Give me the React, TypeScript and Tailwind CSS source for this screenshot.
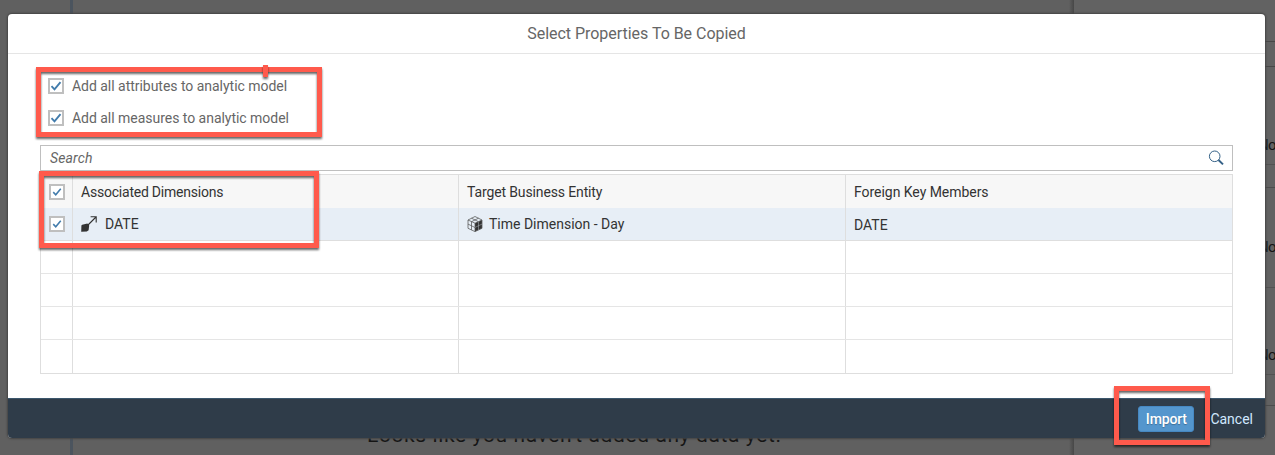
import React from "react";

function Check({ small = false }: { small?: boolean }) {
  return (
    <span className="flex h-4 w-4 shrink-0 items-center justify-center border-2 border-[#bfbfbf] bg-white">
      <svg viewBox="0 0 12 12" className={small ? "h-[10px] w-[10px]" : "h-3 w-3"} fill="none" stroke="#427cac" strokeWidth="1.9">
        <path d="M1.5 6.2 4.5 9.3 10.5 2.2" />
      </svg>
    </span>
  );
}

function Option({ label }: { label: string }) {
  return (
    <div className="flex h-8 items-center gap-2 text-[#666]">
      <Check />
      <span className="tracking-[-0.03px]">{label}</span>
    </div>
  );
}

function LinkIcon() {
  return (
    <svg viewBox="0 0 16 16" className="h-4 w-4 shrink-0" fill="none" stroke="#333" strokeWidth="1.1">
      <path d="M6 10 15 1M9.6.8h5.6v5.6" />
      <path d="M1.2 8.7 6.4 7.6 8.2 9.4 7.6 14.2 5.8 15.4.2 15.8.4 9.6Z" fill="#333" stroke="none" />
    </svg>
  );
}

function CubeIcon() {
  return (
    <svg viewBox="0 0 16 16" className="h-4 w-4 shrink-0" fill="none" stroke="#555" strokeWidth=".75">
      <path d="M8 7.2 15 4v8.3L8 15.6Z" fill="#333" stroke="none" />
      <path d="M8 .5 15 4v8.3L8 15.6 1 12.3V4ZM1 4l7 3.2L15 4M8 7.2v8.4M1 8.1l7 3.4M4.5 5.6v8.3M4.5 2.2l7 3.5M11.5 2.2l-7 3.5" />
      <path d="m8 11.4 7-3.3M11.5 5.6v8.4" stroke="#b5bac1" strokeWidth=".5" />
    </svg>
  );
}

function Backdrop() {
  return (
    <div className="absolute inset-0 flex bg-[#606060]">
      <div className="w-[70px]" />
      <div className="w-[3px] bg-[#4b545e]" />
      <div className="flex-1 pt-[422px] pl-[294px] text-[21px] leading-[26px] tracking-[0.6px] whitespace-nowrap text-[#151515]">
        Looks like you haven't added any data yet.
      </div>
      <div className="w-[5px] bg-linear-to-r from-[#606060] to-[#474747]" />
      <div className="flex w-[201px] flex-col bg-[#626262] pt-[41px] text-[15px] leading-[18px] tracking-[-0.8px] text-[#151515]">
        <div className="h-[26px] border-y border-[#474747]" />
        <div className="flex h-[98px] items-end justify-end border-b border-[#525252] pb-[10px]"><span className="w-[17px]">No</span></div>
        <div className="h-[23px] border-b border-[#4c4c4c]" />
        <div className="flex h-[100px] items-end justify-end border-b border-[#525252] pb-[31px]"><span className="w-[17px]">No</span></div>
        <div className="flex h-[87px] items-end justify-end border-b border-[#525252] pb-[10px]"><span className="w-[17px]">No</span></div>
        <div className="h-[31px] border-b border-[#4c4c4c]" />
      </div>
    </div>
  );
}

const columns = "grid grid-cols-[31px_386px_387px_1fr]";
const cell = "flex items-center border-l border-[#dedede] pl-2";

export default function App() {
  return (
    <main className="relative h-[455px] w-[1275px] overflow-hidden font-['Roboto',sans-serif] text-[14px]">
      <Backdrop />
      <div className="relative pt-[14px] pr-[10px] pl-2">
        <section className="flex h-[424px] flex-col overflow-hidden rounded-[4px] bg-white shadow-[0_0_2px_1px_#444]">
          <header className="flex h-10 shrink-0 items-center justify-center border-b border-[#e5e5e5] text-[16px] text-[#666]">
            <h1 className="tracking-[-0.03px]">Select Properties To Be Copied</h1>
          </header>
          <div className="flex-1 px-8 pt-4">
            <div className="pl-2">
              <Option label="Add all attributes to analytic model" />
              <Option label="Add all measures to analytic model" />
            </div>
            <div className="mt-[11px] flex h-[26px] items-center justify-between border border-[#bfbfbf] pr-2 pl-[9px] text-[#666]">
              <span className="tracking-[0.15px] italic">Search</span>
              <svg viewBox="0 0 16 16" className="h-4 w-4" fill="none" stroke="#346187">
                <circle cx="6.7" cy="6.3" r="5.3" strokeWidth="1" />
                <path d="m10.5 10 4.5 4.4" strokeWidth="2" />
              </svg>
            </div>
            <div className="mt-[3px] border border-[#dedede] text-[#333]">
              <div className={`${columns} h-[33px] bg-[#f7f7f7]`}>
                <div className="flex items-center pl-2"><Check small /></div>
                <div className={`${cell} pt-[2px]`}><span className="tracking-[-0.22px]">Associated Dimensions</span></div>
                <div className={`${cell} pt-[2px]`}><span className="tracking-[-0.13px]">Target Business Entity</span></div>
                <div className={`${cell} pt-[2px]`}><span className="tracking-[-0.04px]">Foreign Key Members</span></div>
              </div>
              <div className={`${columns} h-[33px] border-b border-[#dedede] bg-[#e7eef6]`}>
                <div className="flex items-center pl-2"><Check small /></div>
                <div className={`${cell} gap-2`}><LinkIcon /><span>DATE</span></div>
                <div className={`${cell} gap-[6px]`}><CubeIcon /><span>Time Dimension - Day</span></div>
                <div className={`${cell} pt-[2px]`}><span>DATE</span></div>
              </div>
              {[0, 1, 2, 3].map((row) => (
                <div key={row} className={`${columns} h-[33px] border-b border-[#e5e5e5] last:border-b-0`}>
                  <div />
                  <div className={cell} />
                  <div className={cell} />
                  <div className={cell} />
                </div>
              ))}
            </div>
          </div>
          <footer className="flex h-10 shrink-0 items-center justify-end gap-4 border-t border-[#3b566c] bg-[#2f3c49] pr-3">
            <button className="h-[26px] w-[56px] rounded-[3px] border border-[#4688c2] bg-[#5496cd] pt-[2px] font-medium tracking-[-0.15px] text-white [text-shadow:0_1px_1px_#0004]">Import</button>
            <button className="pt-[2px] text-[#d1e8ff]">Cancel</button>
          </footer>
        </section>
      </div>
      <div className="absolute top-[67px] left-[36px] h-[70px] w-[286px] border-[5px] border-[#ff5a4c] drop-shadow-[0_2px_1px_#0009]" />
      <div className="absolute top-[65px] left-[263px] h-[12px] w-[5px] bg-[#ff5a4c] drop-shadow-[0_2px_1px_#0009]" />
      <div className="absolute top-[171px] left-[39px] h-[77px] w-[280px] border-[5px] border-[#ff5a4c] drop-shadow-[0_2px_1px_#0009]" />
      <div className="absolute top-[386px] left-[1114px] h-[59px] w-[96px] border-[5px] border-[#ff5a4c] drop-shadow-[0_2px_1px_#0009]" />
    </main>
  );
}
